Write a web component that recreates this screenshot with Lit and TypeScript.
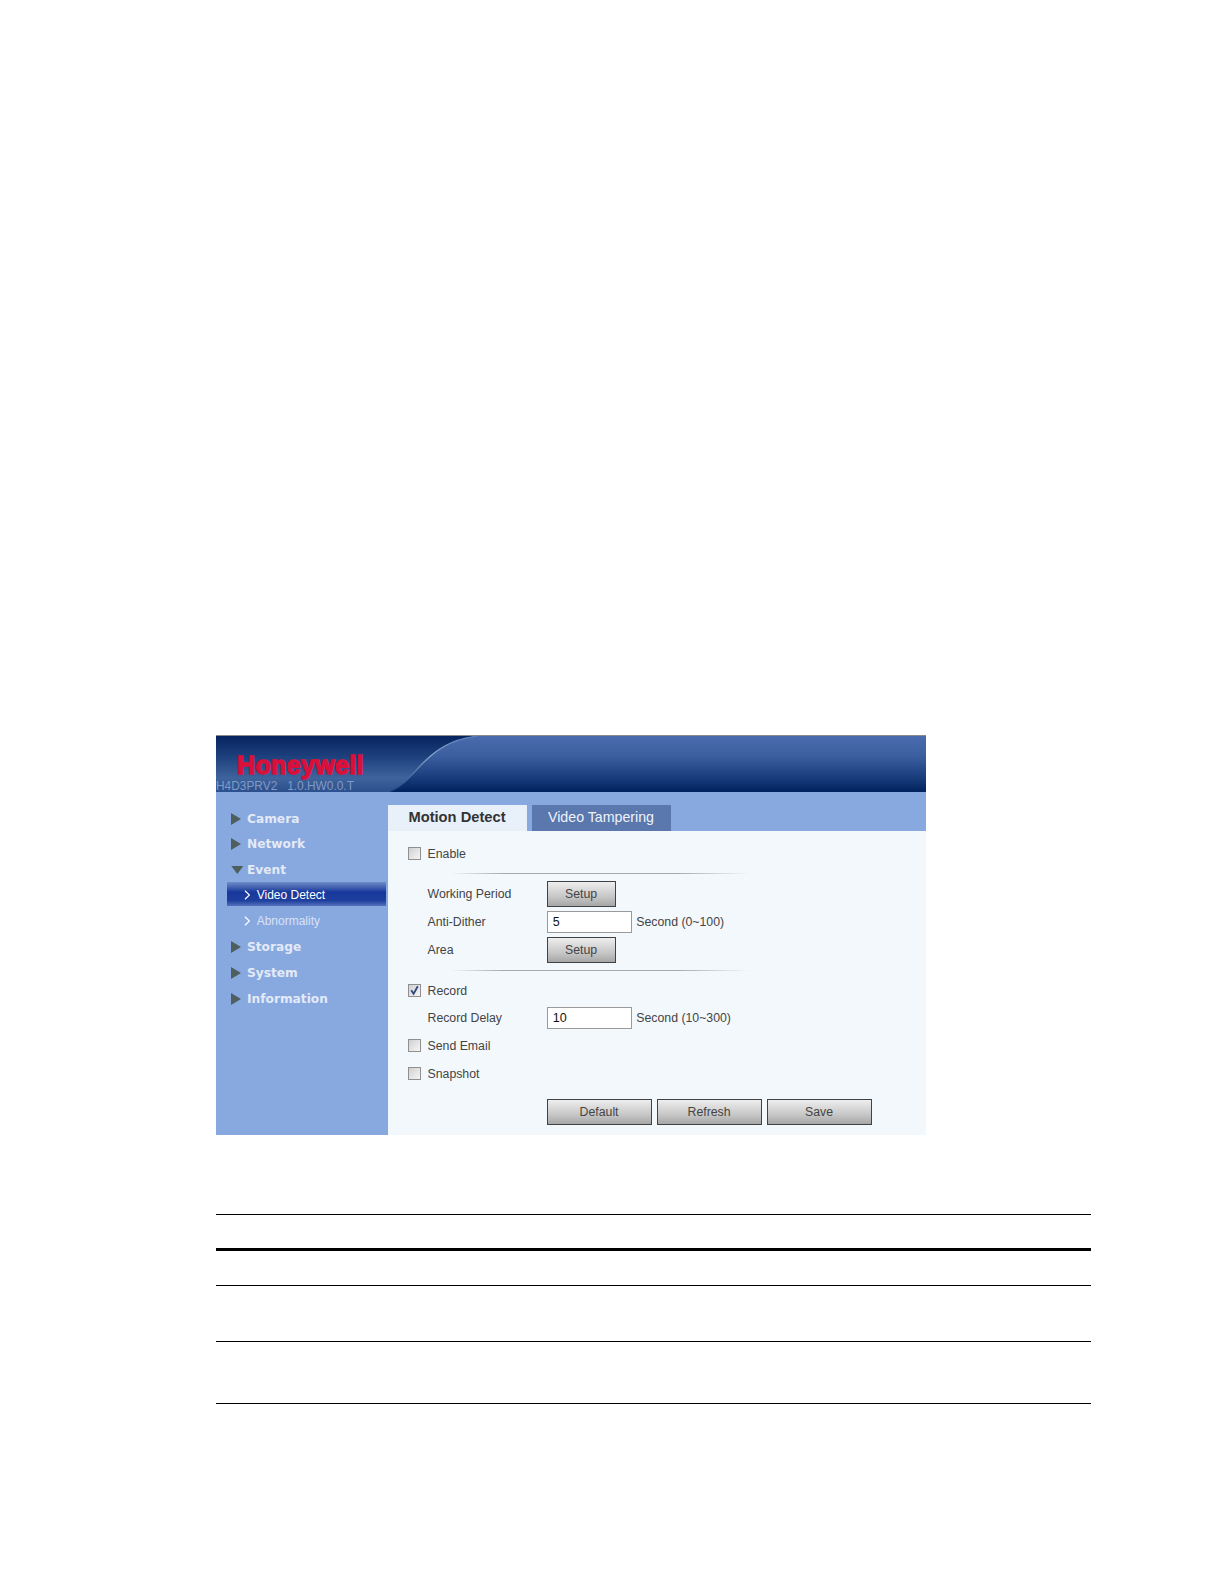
import { LitElement, html, css, svg } from "lit";
import { customElement } from "lit/decorators.js";

@customElement("app-root")
export class AppRoot extends LitElement {
  static styles = css`
    :host { display: block; width: 1224px; height: 1584px; background: #fff; font-family: "Liberation Sans", Arial, sans-serif; overflow: hidden; }
    .page { padding: 735px 0 0 216px; }
    .window { width: 710px; height: 400px; display: flex; flex-direction: column; background: #88a8e0; }
    .header { position: relative; height: 57px; flex: none; box-sizing: border-box; border-top: 1px solid #8a8a8a; background: linear-gradient(#4a6cae 0%, #3c5f9f 35%, #1d4080 70%, #00235f 100%); }
    .header svg { position: absolute; left: 0; top: 0; }
    .logo { position: absolute; left: 21px; top: 14px; font-size: 25px; line-height: 30px; font-weight: 700; color: #d8103a; -webkit-text-stroke: 1.4px #d8103a; letter-spacing: 0.35px; }
    .ver { position: absolute; left: 0; top: 42.7px; font-size: 11.9px; line-height: 14px; color: #7f9ac6; white-space: pre; }
    .main { flex: 1; display: flex; }
    .nav { width: 172px; flex: none; padding-top: 13.6px; box-sizing: border-box; }
    .item { height: 25.9px; display: flex; align-items: center; padding-left: 15px; gap: 6px; font-family: "DejaVu Sans", sans-serif; font-weight: 700; font-size: 12.2px; color: #e3eaf6; }
    .tri { width: 10px; height: 12px; flex: none; fill: #4f5f60; }
    .tri.down { width: 12.6px; height: 8px; margin-right: -2.6px; }
    .sub { height: 25.8px; display: flex; align-items: center; gap: 6.4px; font-size: 12px; color: #d8e2f4; margin: 0 2px 0 11.3px; padding-left: 16.4px; box-sizing: border-box; }
    .sub.on { height: 23.4px; margin-top: -0.8px; margin-bottom: 2.5px; padding-top: 2px; color: #fff; background: linear-gradient(#6f8cc8 0%, #3d5cae 25%, #17379c 42%, #20409f 78%, #5472bc 100%); }
    .sub svg { flex: none; width: 6.6px; height: 10px; fill: none; stroke: #fff; stroke-width: 1.3; }
    .panel { flex: 1; display: flex; flex-direction: column; }
    .tabs { height: 26px; margin-top: 13px; display: flex; flex: none; }
    .tab { width: 139px; height: 26px; box-sizing: border-box; padding: 0 1px 2px 0; display: flex; align-items: center; justify-content: center; }
    .tab.active { background: #e8f0f9; font-weight: 700; font-size: 14.7px; color: #333; }
    .tab.other { margin-left: 5px; background: #5a78ae; font-size: 14.2px; color: #eef2fa; }
    .body { flex: 1; background: #f3f8fd; padding: 8.5px 0 0 20px; display: flex; flex-direction: column; font-size: 12.3px; color: #444; }
    .row { display: flex; align-items: center; flex: none; }
    .cb { width: 13px; height: 13px; box-sizing: border-box; border: 1px solid #8f8f8f; background: linear-gradient(135deg, #d0d0d0, #f6f6f6); margin-right: 6.5px; flex: none; display: flex; }
    .cb svg { width: 11px; height: 11px; fill: none; stroke: #34477e; stroke-width: 1.8; }
    .lbl { width: 139.3px; flex: none; padding-left: 19.5px; box-sizing: border-box; }
    .btn { height: 25.4px; box-sizing: border-box; border: 1px solid #3f4345; padding-right: 1px; background: linear-gradient(#eeeeee, #c4c4c4 65%, #a6a6a6); display: flex; align-items: center; justify-content: center; color: #444; }
    .setup { width: 68.6px; }
    .wide { width: 104.5px; }
    .inp { width: 84.7px; height: 21.7px; box-sizing: border-box; border: 1px solid #9a9a9a; background: #fff; color: #111; font-size: 12.5px; padding-left: 4.5px; display: flex; align-items: center; margin-right: 4.3px; }
    .hr { height: 1px; width: 300px; margin-left: 42px; background: linear-gradient(90deg, #f3f8fd 0%, #a5a9ab 18%, #a5a9ab 75%, #f3f8fd 100%); flex: none; }
    .r28 { height: 28px; }
    .mt-hr1 { margin-top: 5.2px; }
    .mt-set1 { margin-top: 7.6px; }
    .mt-inp1 { margin-top: 4.3px; }
    .mt-set2 { margin-top: 4.6px; }
    .mt-hr2 { margin-top: 7.8px; }
    .mt-rec { margin-top: 5.3px; }
    .mt-inp2 { margin-top: 2.5px; }
    .mt-mail { margin-top: 2.7px; }
    .actions { display: flex; gap: 5.5px; padding-left: 139.3px; margin-top: 11.6px; }
    .rules { width: 875px; margin-top: 79px; }
    .rule { background: #000; }
    .r1 { height: 1px; }
    .r2 { height: 3px; margin-top: 33px; }
    .r3 { height: 1px; margin-top: 34px; }
    .r4 { height: 1px; margin-top: 55px; }
    .r5 { height: 1px; margin-top: 61px; }
  `;

  private tri() {
    return html`<svg class="tri" viewBox="0 0 10 12"><path d="M0 0 L10 6 L0 12 Z"></path></svg>`;
  }
  private triDown() {
    return html`<svg class="tri down" viewBox="0 0 12 8"><path d="M0 0 L12 0 L6 8 Z"></path></svg>`;
  }
  private chev() {
    return html`<svg viewBox="0 0 7 10"><path d="M1 .5 L5.8 5 L1 9.5"></path></svg>`;
  }
  private cb(checked = false) {
    return html`<span class="cb">${checked ? html`<svg viewBox="0 0 11 11"><path d="M2.2 5.2 L4.6 8.8 L8.8 1.2"></path></svg>` : ""}</span>`;
  }

  render() {
    const headerArt = svg`
      <defs>
        <linearGradient id="lg" x1="0" y1="0" x2="0" y2="1">
          <stop offset="0" stop-color="#06245f"></stop>
          <stop offset="0.35" stop-color="#1c3f7c"></stop>
          <stop offset="0.75" stop-color="#3f639c"></stop>
          <stop offset="1" stop-color="#2c4f8d"></stop>
        </linearGradient>
        <linearGradient id="edge" x1="0" y1="1" x2="1" y2="0">
          <stop offset="0" stop-color="#123a78"></stop>
          <stop offset="0.55" stop-color="#8fa9d0"></stop>
          <stop offset="1" stop-color="#5a7cb8"></stop>
        </linearGradient>
      </defs>
      <path d="M0 0 H262 C235 3 220 14 207 27 C197 37 190 48 174 56 H0 Z" fill="url(#lg)"></path>
      <path d="M174 56 C190 48 197 37 207 27 C220 14 235 3 262 0" fill="none" stroke="url(#edge)" stroke-width="1.2"></path>`;
    return html`<div class="page">
      <div class="window">
        <div class="header">
          <svg width="710" height="56" viewBox="0 0 710 56">${headerArt}</svg>
          <div class="logo">Honeywell</div>
          <div class="ver">H4D3PRV2   1.0.HW0.0.T</div>
        </div>
        <div class="main">
          <div class="nav">
            <div class="item">${this.tri()}Camera</div>
            <div class="item">${this.tri()}Network</div>
            <div class="item">${this.triDown()}Event</div>
            <div class="sub on">${this.chev()}Video Detect</div>
            <div class="sub">${this.chev()}Abnormality</div>
            <div class="item">${this.tri()}Storage</div>
            <div class="item">${this.tri()}System</div>
            <div class="item">${this.tri()}Information</div>
          </div>
          <div class="panel">
            <div class="tabs">
              <div class="tab active">Motion Detect</div>
              <div class="tab other">Video Tampering</div>
            </div>
            <div class="body">
              <div class="row r28">${this.cb()}<span>Enable</span></div>
              <div class="hr mt-hr1"></div>
              <div class="row mt-set1"><span class="lbl">Working Period</span><span class="btn setup">Setup</span></div>
              <div class="row mt-inp1"><span class="lbl">Anti-Dither</span><span class="inp">5</span><span>Second (0~100)</span></div>
              <div class="row mt-set2"><span class="lbl">Area</span><span class="btn setup">Setup</span></div>
              <div class="hr mt-hr2"></div>
              <div class="row r28 mt-rec">${this.cb(true)}<span>Record</span></div>
              <div class="row mt-inp2"><span class="lbl">Record Delay</span><span class="inp">10</span><span>Second (10~300)</span></div>
              <div class="row r28 mt-mail">${this.cb()}<span>Send Email</span></div>
              <div class="row r28">${this.cb()}<span>Snapshot</span></div>
              <div class="actions">
                <span class="btn wide">Default</span><span class="btn wide">Refresh</span><span class="btn wide">Save</span>
              </div>
            </div>
          </div>
        </div>
      </div>
      <div class="rules">
        <div class="rule r1"></div>
        <div class="rule r2"></div>
        <div class="rule r3"></div>
        <div class="rule r4"></div>
        <div class="rule r5"></div>
      </div>
    </div>`;
  }
}
